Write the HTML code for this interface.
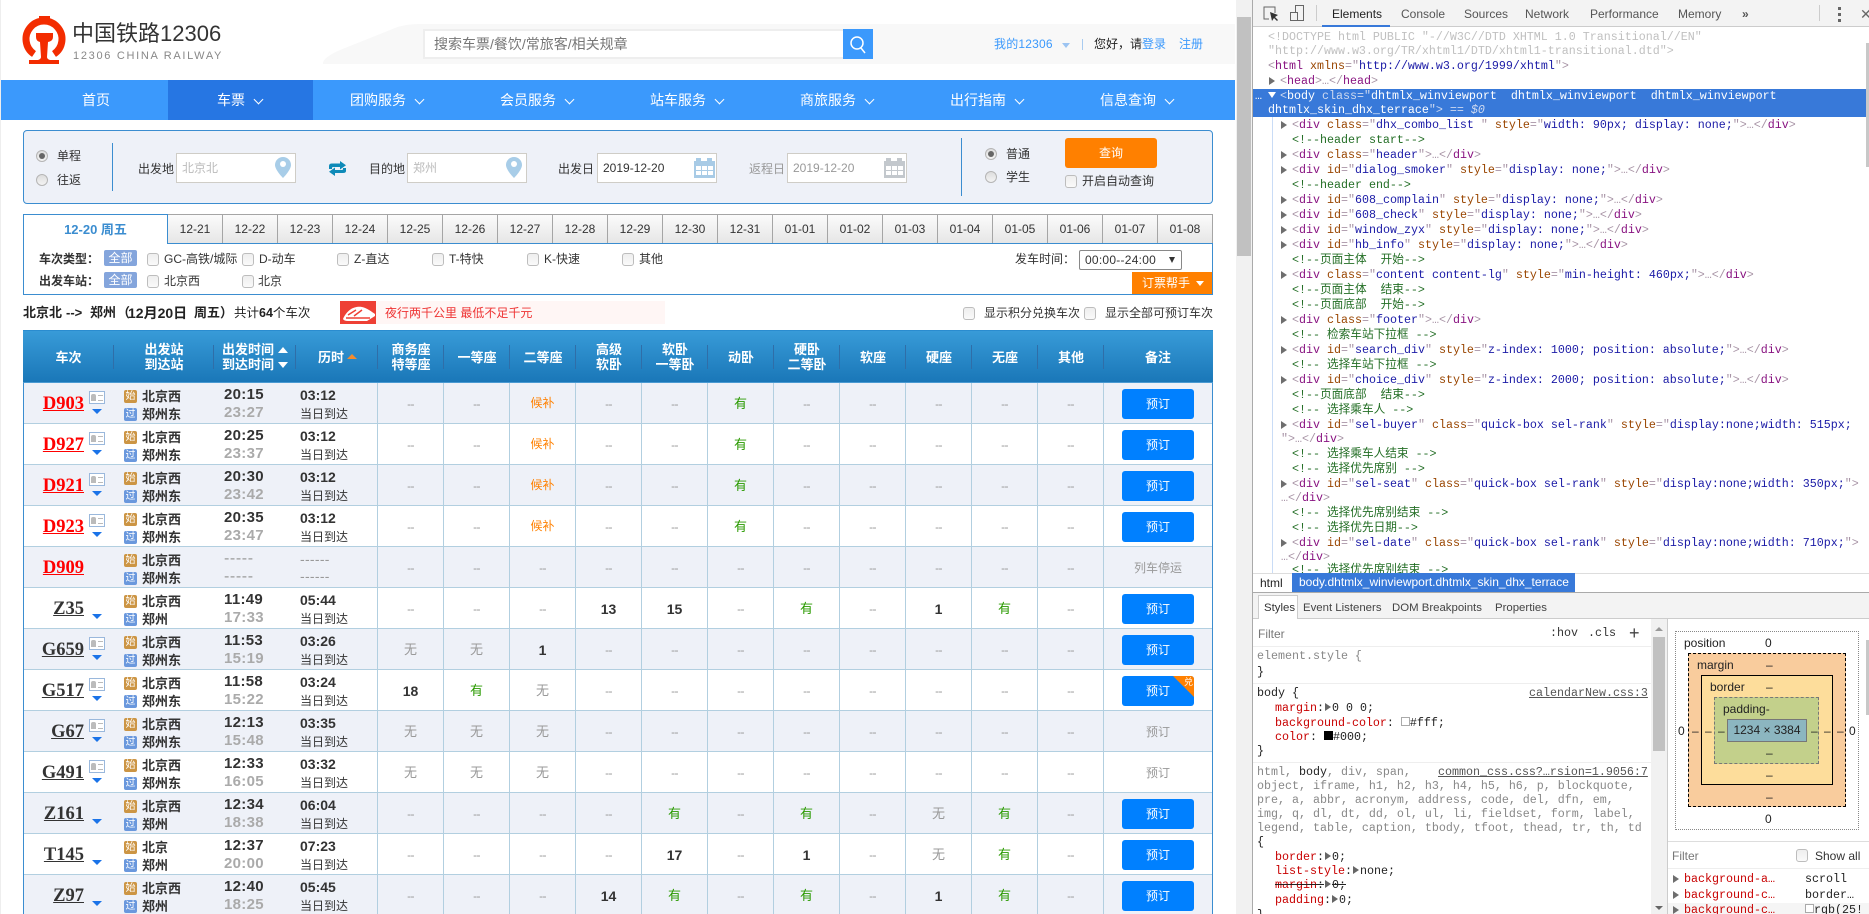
<!DOCTYPE html>
<html lang="zh"><head><meta charset="utf-8"><title>12306</title>
<style>
*{box-sizing:border-box;margin:0;padding:0}
html,body{width:1869px;height:914px;overflow:hidden;background:#fff}
body{position:relative;font:12px/1.2 "Liberation Sans","Noto Sans CJK SC",sans-serif;color:#333}
.x{position:absolute;white-space:nowrap}
.c{text-align:center}
.nav{left:1px;top:80px;width:1234px;height:40px;background:#3b99fc}
.nt{position:absolute;top:92px;color:#fff;font-size:14px;line-height:17px;white-space:nowrap}
.ar{position:absolute;top:96px;width:7px;height:7px;border:solid #fff;border-width:0 1.5px 1.5px 0;transform:rotate(45deg)}
.inp{position:absolute;top:153px;height:30px;width:120px;background:#fff;border:1px solid #cfcdc7;line-height:28px;padding-left:5px;color:#bbb}
.lb{position:absolute;line-height:16px;white-space:nowrap;color:#333}
.rd{position:absolute;width:12px;height:12px;border-radius:50%;background:linear-gradient(#ddd,#f4f4f4);border:1px solid #b5b5b5}
.rd.on:after{content:"";position:absolute;left:2px;top:2px;width:6px;height:6px;border-radius:50%;background:#666}
.cb{position:absolute;width:12px;height:13px;border:1px solid #bdbdbd;border-radius:3px;background:linear-gradient(#eee,#fafafa)}
.tab{position:absolute;top:214px;height:29px;width:55px;background:linear-gradient(#fbfbfb,#e6e6e6);border-top:1px solid #a5a5a5;border-right:1px solid #a5a5a5;text-align:center;line-height:28px;color:#333}
.tg{position:absolute;left:104px;width:33px;height:16px;background:#84a5dc;color:#fff;text-align:center;line-height:16px;border-radius:2px}
.r{position:absolute;left:24px;width:1188px;height:41px;border-bottom:1px solid #b2cfe0;background:#fff}
.r.a{background:#eef1f8}
.r>*{position:absolute;white-space:nowrap}
.n{left:0;width:60px;top:10px;text-align:right;font:bold 18.5px/22px "Liberation Serif",serif;color:#333;text-decoration:underline}
.n.red{color:#f00}
.cd{left:65px;top:8px;width:16px;height:13px;border:1px solid #9ab8dc;background:#fff}
.cd:before{content:"";position:absolute;left:1px;top:2px;width:5px;height:7px;background:#bbb;border-radius:2px 2px 0 0}
.cd:after{content:"";position:absolute;left:8px;top:3px;width:5px;height:4px;border:solid #bbb;border-width:1px 0}
.tr{left:68px;top:26px;border:solid transparent;border-width:5px 5px 0;border-top-color:#1a73e8;width:0;height:0}
.b1,.b2{left:100px;width:13px;height:13px;border-radius:2px;color:#fff;font:10px/13px "Liberation Sans","Noto Sans CJK SC",sans-serif;text-align:center}
.b1{top:7px;background:#cc9544}.b2{top:25px;background:#6a98dd}
.s1,.s2{left:118px;font-size:13px;font-weight:bold;line-height:17px;color:#333}
.s1{top:5px}.s2{top:23px}
.t1,.t2{left:200px;font:bold 15px/17px "Liberation Sans",sans-serif;letter-spacing:.3px}
.t1{top:3px;color:#333}.t2{top:21px;color:#aaa}
.d1{left:276px;top:4px;font:bold 14px/17px "Liberation Sans",sans-serif;color:#333}
.d2{left:276px;top:23px;line-height:16px;color:#333}
.dm{font:12px/17px "Liberation Sans",sans-serif;color:#999}
.t1.dm,.t2.dm{font-size:16px;letter-spacing:.6px;color:#999}
.d1.dm,.d2.dm{font-size:14px;letter-spacing:.3px}
.d2.dm{top:21px}
.s{left:353px;top:0;height:40px;display:flex}
.s i{display:block;width:66px;height:40px;border-left:1px solid #b2cfe0;text-align:center;line-height:42px;font-style:normal;color:#999;letter-spacing:-.6px}
.s i.g{color:#2a9a00;font-size:13px;letter-spacing:0}.s i.o{color:#ff8000;line-height:41px;font-size:12px;letter-spacing:0}.s i.w{line-height:41px;font-size:13px;color:#999;letter-spacing:0}.s i.b{color:#333;font-weight:bold;font-size:14px;letter-spacing:0}
.bt{left:1098px;top:6px;width:72px;height:30px;background:#0080ff;color:#fff;text-align:center;line-height:30px;border-radius:3px;overflow:hidden}
.bt.no{background:none;color:#999}
.st{left:1098px;top:6px;width:72px;text-align:center;line-height:30px;color:#999}
.hd{position:absolute;color:#fff;font-size:13px;font-weight:bold;line-height:15px;text-align:center;white-space:nowrap}
.sp{position:absolute;top:345px;width:1px;height:24px;background:#2f6ea8}
.rl{position:absolute;top:305px;line-height:16px;font-size:13px;font-weight:bold;color:#222;white-space:nowrap}
/* devtools */
.dv{position:absolute;left:1252px;top:0;width:617px;height:914px;background:#fff;border-left:1px solid #aaa;overflow:hidden}
.tb{position:absolute;top:7px;font:12px/14px "Liberation Sans",sans-serif;color:#555;white-space:nowrap}
.l{position:absolute;white-space:pre;font:11.67px/15px "Liberation Mono","Noto Sans CJK SC",monospace;color:#a894a6;height:15px}
.t{color:#881280}.a{color:#994500}.v{color:#1a1aa6}.cm{color:#236e25}
.tri{position:absolute;width:0;height:0;border:solid transparent;border-width:4px 0 4px 6px;border-left-color:#6e6e6e}
.p{position:absolute;white-space:pre;font:11.67px/15px "Liberation Mono","Noto Sans CJK SC",monospace;color:#888;height:15px}
.p em{font-style:normal;color:#c80000}.p b{font-weight:normal;color:#222}
.p s{color:#222}.p s em{color:#c80000}
.m{position:absolute;white-space:nowrap;font:12px/14px "Liberation Sans",sans-serif;color:#222}
.m.st2{font-size:11.4px}
.tm{display:inline-block;width:0;height:0;border:solid transparent;border-width:4px 0 4px 6px;border-left-color:#666;margin:0 1px}
</style></head><body>
<div class="x" style="left:0;top:0;width:1px;height:914px;background:#eee"></div>
<svg class="x" style="left:0;top:0" width="1235" height="80">
<path d="M323 64Q322 58 340 50L395 28Q405 24 420 24H1235V64Z" fill="#f8f8f8"/>
<path d="M34 54A18 18 0 1 1 54 54" stroke="#f32c00" stroke-width="7" fill="none"/>
<rect x="39" y="16" width="11" height="4" fill="#f32c00"/>
<path d="M36 33H53V37Q53 41 48 42L47 57Q47 59 50 60H59V64H29V60H38Q41 59 41 57L40 42Q36 41 36 37Z" fill="#f32c00"/>
</svg>
<div class="x" style="left:72px;top:21px;font-size:22px;line-height:26px;color:#333">中国铁路12306</div>
<div class="x" style="left:73px;top:49px;font-size:11px;line-height:14px;letter-spacing:1.7px;color:#888">12306 CHINA RAILWAY</div>
<div class="x" style="left:423px;top:29px;width:421px;height:30px;background:#fff;border:2px solid #eee;border-right:0;font-size:14px;line-height:26px;padding-left:9px;color:#777">搜索车票/餐饮/常旅客/相关规章</div>
<div class="x" style="left:843px;top:29px;width:30px;height:30px;background:#3b99fc"><svg width="30" height="30"><circle cx="14" cy="14" r="6" fill="none" stroke="#fff" stroke-width="1.5"/><path d="M18 19L22 24" stroke="#fff" stroke-width="1.5"/></svg></div>
<div class="x" style="left:994px;top:36px;line-height:16px;color:#3b99fc;letter-spacing:.2px">我的12306</div>
<div class="x" style="left:1062px;top:43px;border:solid transparent;border-width:5px 4.5px 0;border-top-color:#9cc4f2"></div>
<div class="x" style="left:1082px;top:39px;width:1px;height:11px;background:#a8cbf0"></div>
<div class="x" style="left:1094px;top:36px;line-height:16px;color:#222">您好，请<span style="color:#3b99fc">登录</span></div>
<div class="x" style="left:1179px;top:36px;line-height:16px;color:#3b99fc">注册</div>

<div class="x nav"></div>
<div class="x" style="left:168px;top:80px;width:145px;height:40px;background:#2676e3"></div>
<span class="nt" style="left:82px">首页</span>
<span class="nt" style="left:217px">车票</span><i class="ar" style="left:255px"></i>
<span class="nt" style="left:350px">团购服务</span><i class="ar" style="left:416px"></i>
<span class="nt" style="left:500px">会员服务</span><i class="ar" style="left:566px"></i>
<span class="nt" style="left:650px">站车服务</span><i class="ar" style="left:716px"></i>
<span class="nt" style="left:800px">商旅服务</span><i class="ar" style="left:866px"></i>
<span class="nt" style="left:950px">出行指南</span><i class="ar" style="left:1016px"></i>
<span class="nt" style="left:1100px">信息查询</span><i class="ar" style="left:1166px"></i>

<div class="x" style="left:1236px;top:0;width:16px;height:914px;background:#f1f1f1"></div>
<div class="x" style="left:1237px;top:17px;width:14px;height:239px;background:#c1c1c1"></div>

<!-- search panel -->
<div class="x" style="left:23px;top:130px;width:1190px;height:74px;background:#eef1f8;border:1px solid #3b8dd0;border-radius:4px"></div>
<i class="rd on" style="left:36px;top:150px"></i><span class="lb" style="left:57px;top:148px">单程</span>
<i class="rd" style="left:36px;top:174px"></i><span class="lb" style="left:57px;top:172px">往返</span>
<div class="x" style="left:112px;top:143px;width:1px;height:48px;background:#3b8dd0"></div>
<span class="lb" style="left:138px;top:161px">出发地</span>
<div class="inp" style="left:176px">北京北</div>
<svg class="x" style="left:275px;top:157px" width="16" height="21"><path d="M8 0C3.500 0 0 3.500 0 8C0 13 8 21 8 21C8 21 16 13 16 8C16 3.500 12.500 0 8 0Z" fill="#a8cde8"/><circle cx="8" cy="7" r="3" fill="#fff"/></svg>
<svg class="x" style="left:329px;top:161px" width="17" height="15" fill="#0e8ab8"><path d="M0 8V5Q0 2.500 3 2.500H11V0L17 4.200 11 8.500V6H4Q3 6 3 7V8Z"/><path d="M17 7V10Q17 12 14 12H6V15L0 10.800 6 6.500V9H13Q14 9 14 8V7Z"/></svg>
<span class="lb" style="left:369px;top:161px">目的地</span>
<div class="inp" style="left:407px">郑州</div>
<svg class="x" style="left:506px;top:157px" width="16" height="21"><path d="M8 0C3.500 0 0 3.500 0 8C0 13 8 21 8 21C8 21 16 13 16 8C16 3.500 12.500 0 8 0Z" fill="#a8cde8"/><circle cx="8" cy="7" r="3" fill="#fff"/></svg>
<span class="lb" style="left:558px;top:161px">出发日</span>
<div class="inp" style="left:597px;color:#333">2019-12-20</div>
<svg class="x" style="left:694px;top:158px" width="21" height="20" fill="#a8cbe6"><rect x="2" width="5" height="5"/><rect x="13" width="5" height="5"/><rect y="3" width="21" height="17"/><g fill="#fff"><rect x="2" y="8" width="5" height="4"/><rect x="8" y="8" width="5" height="4"/><rect x="14" y="8" width="5" height="4"/><rect x="2" y="13" width="5" height="4"/><rect x="8" y="13" width="5" height="4"/><rect x="14" y="13" width="5" height="4"/></g></svg>
<span class="lb" style="left:749px;top:161px;color:#999">返程日</span>
<div class="inp" style="left:787px;color:#999">2019-12-20</div>
<svg class="x" style="left:884px;top:158px" width="21" height="20" fill="#c3c8cd"><rect x="2" width="5" height="5"/><rect x="13" width="5" height="5"/><rect y="3" width="21" height="17"/><g fill="#fff"><rect x="2" y="8" width="5" height="4"/><rect x="8" y="8" width="5" height="4"/><rect x="14" y="8" width="5" height="4"/><rect x="2" y="13" width="5" height="4"/><rect x="8" y="13" width="5" height="4"/><rect x="14" y="13" width="5" height="4"/></g></svg>
<div class="x" style="left:961px;top:138px;width:1px;height:58px;background:#3b8dd0"></div>
<i class="rd on" style="left:985px;top:148px"></i><span class="lb" style="left:1006px;top:146px">普通</span>
<i class="rd" style="left:985px;top:171px"></i><span class="lb" style="left:1006px;top:169px">学生</span>
<div class="x c" style="left:1065px;top:138px;width:92px;height:30px;background:#ff8000;border-radius:3px;color:#fff;font-size:12px;line-height:30px">查询</div>
<i class="cb" style="left:1065px;top:175px"></i><span class="lb" style="left:1082px;top:173px">开启自动查询</span>

<!-- date tabs -->
<div class="x c" style="left:23px;top:214px;width:145px;height:30px;background:#fff;border:1px solid #3b8dd0;border-bottom:0;border-right:1px solid #3b8dd0;color:#3b8dd0;font-weight:bold;font-size:13px;line-height:30px;z-index:2">12-20 周五</div>
<div class="tab" style="left:168px">12-21</div><div class="tab" style="left:223px">12-22</div><div class="tab" style="left:278px">12-23</div><div class="tab" style="left:333px">12-24</div><div class="tab" style="left:388px">12-25</div><div class="tab" style="left:443px">12-26</div><div class="tab" style="left:498px">12-27</div><div class="tab" style="left:553px">12-28</div><div class="tab" style="left:608px">12-29</div><div class="tab" style="left:663px">12-30</div><div class="tab" style="left:718px">12-31</div><div class="tab" style="left:773px">01-01</div><div class="tab" style="left:828px">01-02</div><div class="tab" style="left:883px">01-03</div><div class="tab" style="left:938px">01-04</div><div class="tab" style="left:993px">01-05</div><div class="tab" style="left:1048px">01-06</div><div class="tab" style="left:1103px">01-07</div><div class="tab" style="left:1158px">01-08</div>

<!-- filter -->
<div class="x" style="left:23px;top:243px;width:1190px;height:52px;border:1px solid #3b8dd0;background:#fff"></div>
<div class="x" style="left:168px;top:243px;width:1045px;height:1px;background:#3b8dd0"></div>
<span class="lb" style="left:39px;top:251px;font-weight:bold">车次类型：</span><span class="tg" style="top:250px">全部</span>
<i class="cb" style="left:147px;top:253px"></i><span class="lb" style="left:164px;top:251px">GC-高铁/城际</span>
<i class="cb" style="left:242px;top:253px"></i><span class="lb" style="left:259px;top:251px">D-动车</span>
<i class="cb" style="left:337px;top:253px"></i><span class="lb" style="left:354px;top:251px">Z-直达</span>
<i class="cb" style="left:432px;top:253px"></i><span class="lb" style="left:449px;top:251px">T-特快</span>
<i class="cb" style="left:527px;top:253px"></i><span class="lb" style="left:544px;top:251px">K-快速</span>
<i class="cb" style="left:622px;top:253px"></i><span class="lb" style="left:639px;top:251px">其他</span>
<span class="lb" style="left:39px;top:273px;font-weight:bold">出发车站：</span><span class="tg" style="top:272px">全部</span>
<i class="cb" style="left:147px;top:275px"></i><span class="lb" style="left:164px;top:273px">北京西</span>
<i class="cb" style="left:242px;top:275px"></i><span class="lb" style="left:258px;top:273px">北京</span>
<span class="lb" style="left:1015px;top:251px">发车时间：</span>
<div class="x" style="left:1079px;top:250px;width:103px;height:20px;border:1px solid #888;border-radius:2px;background:#fff;line-height:19px;padding-left:5px;color:#333;letter-spacing:.25px">00:00--24:00</div>
<div class="x" style="left:1169px;top:257px;border:solid transparent;border-width:6px 3.500px 0;border-top-color:#333"></div>
<div class="x" style="left:1132px;top:272px;width:80px;height:22px;background:#ff8000;color:#fff;line-height:22px;padding-left:10px">订票帮手</div>
<div class="x" style="left:1196px;top:281px;border:solid transparent;border-width:5px 4.500px 0;border-top-color:#fff"></div>

<!-- result line -->
<span class="rl" style="left:23px">北京北</span><span class="rl" style="left:66px">--&gt;</span><span class="rl" style="left:90px">郑州</span><span class="rl" style="left:117px">（</span><span class="rl" style="left:128px;font-size:14px">12月20日</span><span class="rl" style="left:194px">周五</span><span class="rl" style="left:220px">）</span>
<div class="x" style="left:234px;top:305px;line-height:16px;color:#222;font-size:12.5px">共计<b>64</b>个车次</div>
<div class="x" style="left:340px;top:301px;width:325px;height:23px;background:#fff6f5"></div>
<div class="x" style="left:340px;top:301px;width:36px;height:23px;background:#ee4035"><svg width="36" height="23"><path d="M3 18C8 7 16 5 22 6C27 7 32 11 35 13V15L27 20H8Q4 20 3 18Z" fill="#fff"/><path d="M8 14L16 9M14 15L22 9M6 17H30" stroke="#ee4035" stroke-width="1.500" fill="none"/></svg></div>
<div class="x" style="left:385px;top:305px;line-height:16px;color:#ee3333">夜行两千公里 最低不足千元</div>
<i class="cb" style="left:963px;top:307px"></i><span class="lb" style="left:984px;top:305px">显示积分兑换车次</span>
<i class="cb" style="left:1084px;top:307px"></i><span class="lb" style="left:1105px;top:305px">显示全部可预订车次</span>

<!-- table head -->
<div class="x" style="left:23px;top:330px;width:1190px;height:53px;background:linear-gradient(#389bd8,#1a77b8);border-top:1px solid #2a8ccf;border-bottom:1px solid #4a9ad2"></div>
<div class="x" style="left:23px;top:383px;width:1px;height:531px;background:#3b8dd0"></div>
<div class="x" style="left:1212px;top:383px;width:1px;height:531px;background:#3b8dd0"></div>
<i class="sp" style="left:113px"></i><i class="sp" style="left:213px"></i><i class="sp" style="left:295px"></i><i class="sp" style="left:377px"></i><i class="sp" style="left:443px"></i><i class="sp" style="left:509px"></i><i class="sp" style="left:575px"></i><i class="sp" style="left:641px"></i><i class="sp" style="left:707px"></i><i class="sp" style="left:773px"></i><i class="sp" style="left:839px"></i><i class="sp" style="left:905px"></i><i class="sp" style="left:971px"></i><i class="sp" style="left:1037px"></i><i class="sp" style="left:1103px"></i>
<div class="hd" style="left:24px;width:89px;top:350px">车次</div>
<div class="hd" style="left:114px;width:100px;top:342px">出发站<br>到达站</div>
<div class="hd" style="left:222px;top:342px">出发时间<br>到达时间</div>
<div class="x" style="left:278px;top:347px;border:solid transparent;border-width:0 5px 6px;border-bottom-color:#fff"></div>
<div class="x" style="left:278px;top:362px;border:solid transparent;border-width:6px 5px 0;border-top-color:#fff"></div>
<div class="hd" style="left:318px;top:350px">历时</div>
<div class="x" style="left:347px;top:354px;border:solid transparent;border-width:0 5px 5px;border-bottom-color:#f38c2f"></div>
<div class="hd" style="left:378px;width:66px;top:342px">商务座<br>特等座</div>
<div class="hd" style="left:444px;width:66px;top:350px">一等座</div>
<div class="hd" style="left:510px;width:66px;top:350px">二等座</div>
<div class="hd" style="left:576px;width:66px;top:342px">高级<br>软卧</div>
<div class="hd" style="left:642px;width:66px;top:342px">软卧<br>一等卧</div>
<div class="hd" style="left:708px;width:66px;top:350px">动卧</div>
<div class="hd" style="left:774px;width:66px;top:342px">硬卧<br>二等卧</div>
<div class="hd" style="left:840px;width:66px;top:350px">软座</div>
<div class="hd" style="left:906px;width:66px;top:350px">硬座</div>
<div class="hd" style="left:972px;width:66px;top:350px">无座</div>
<div class="hd" style="left:1038px;width:66px;top:350px">其他</div>
<div class="hd" style="left:1104px;width:108px;top:350px">备注</div>

<!-- rows -->
<div class="r a" style="top:383px"><a class="n red">D903</a><b class="cd"></b><u class="tr"></u><em class="b1">始</em><em class="b2">过</em><span class="s1">北京西</span><span class="s2">郑州东</span><span class="t1">20:15</span><span class="t2">23:27</span><span class="d1">03:12</span><span class="d2">当日到达</span><div class="s"><i>--</i><i>--</i><i class="o">候补</i><i>--</i><i>--</i><i class="g">有</i><i>--</i><i>--</i><i>--</i><i>--</i><i>--</i><i></i></div><span class="bt">预订</span></div>
<div class="r" style="top:424px"><a class="n red">D927</a><b class="cd"></b><u class="tr"></u><em class="b1">始</em><em class="b2">过</em><span class="s1">北京西</span><span class="s2">郑州东</span><span class="t1">20:25</span><span class="t2">23:37</span><span class="d1">03:12</span><span class="d2">当日到达</span><div class="s"><i>--</i><i>--</i><i class="o">候补</i><i>--</i><i>--</i><i class="g">有</i><i>--</i><i>--</i><i>--</i><i>--</i><i>--</i><i></i></div><span class="bt">预订</span></div>
<div class="r a" style="top:465px"><a class="n red">D921</a><b class="cd"></b><u class="tr"></u><em class="b1">始</em><em class="b2">过</em><span class="s1">北京西</span><span class="s2">郑州东</span><span class="t1">20:30</span><span class="t2">23:42</span><span class="d1">03:12</span><span class="d2">当日到达</span><div class="s"><i>--</i><i>--</i><i class="o">候补</i><i>--</i><i>--</i><i class="g">有</i><i>--</i><i>--</i><i>--</i><i>--</i><i>--</i><i></i></div><span class="bt">预订</span></div>
<div class="r" style="top:506px"><a class="n red">D923</a><b class="cd"></b><u class="tr"></u><em class="b1">始</em><em class="b2">过</em><span class="s1">北京西</span><span class="s2">郑州东</span><span class="t1">20:35</span><span class="t2">23:47</span><span class="d1">03:12</span><span class="d2">当日到达</span><div class="s"><i>--</i><i>--</i><i class="o">候补</i><i>--</i><i>--</i><i class="g">有</i><i>--</i><i>--</i><i>--</i><i>--</i><i>--</i><i></i></div><span class="bt">预订</span></div>
<div class="r a" style="top:547px"><a class="n red">D909</a><em class="b1">始</em><em class="b2">过</em><span class="s1">北京西</span><span class="s2">郑州东</span><span class="t1 dm">-----</span><span class="t2 dm">-----</span><span class="d1 dm">------</span><span class="d2 dm">------</span><div class="s"><i>--</i><i>--</i><i>--</i><i>--</i><i>--</i><i>--</i><i>--</i><i>--</i><i>--</i><i>--</i><i>--</i><i></i></div><span class="st">列车停运</span></div>
<div class="r" style="top:588px"><a class="n">Z35</a><u class="tr"></u><em class="b1">始</em><em class="b2">过</em><span class="s1">北京西</span><span class="s2">郑州</span><span class="t1">11:49</span><span class="t2">17:33</span><span class="d1">05:44</span><span class="d2">当日到达</span><div class="s"><i>--</i><i>--</i><i>--</i><i class="b">13</i><i class="b">15</i><i>--</i><i class="g">有</i><i>--</i><i class="b">1</i><i class="g">有</i><i>--</i><i></i></div><span class="bt">预订</span></div>
<div class="r a" style="top:629px"><a class="n">G659</a><b class="cd"></b><u class="tr"></u><em class="b1">始</em><em class="b2">过</em><span class="s1">北京西</span><span class="s2">郑州东</span><span class="t1">11:53</span><span class="t2">15:19</span><span class="d1">03:26</span><span class="d2">当日到达</span><div class="s"><i class="w">无</i><i class="w">无</i><i class="b">1</i><i>--</i><i>--</i><i>--</i><i>--</i><i>--</i><i>--</i><i>--</i><i>--</i><i></i></div><span class="bt">预订</span></div>
<div class="r" style="top:670px"><a class="n">G517</a><b class="cd"></b><u class="tr"></u><em class="b1">始</em><em class="b2">过</em><span class="s1">北京西</span><span class="s2">郑州东</span><span class="t1">11:58</span><span class="t2">15:22</span><span class="d1">03:24</span><span class="d2">当日到达</span><div class="s"><i class="b">18</i><i class="g">有</i><i class="w">无</i><i>--</i><i>--</i><i>--</i><i>--</i><i>--</i><i>--</i><i>--</i><i>--</i><i></i></div><span class="bt">预订<svg style="position:absolute;right:0;top:0" width="21" height="21"><path d="M0 0H21V21Z" fill="#ff8000"/></svg><span style="position:absolute;right:1px;top:0;color:#fff;font-size:9px;line-height:12px">兑</span></span></div>
<div class="r a" style="top:711px"><a class="n">G67</a><b class="cd"></b><u class="tr"></u><em class="b1">始</em><em class="b2">过</em><span class="s1">北京西</span><span class="s2">郑州东</span><span class="t1">12:13</span><span class="t2">15:48</span><span class="d1">03:35</span><span class="d2">当日到达</span><div class="s"><i class="w">无</i><i class="w">无</i><i class="w">无</i><i>--</i><i>--</i><i>--</i><i>--</i><i>--</i><i>--</i><i>--</i><i>--</i><i></i></div><span class="bt no">预订</span></div>
<div class="r" style="top:752px"><a class="n">G491</a><b class="cd"></b><u class="tr"></u><em class="b1">始</em><em class="b2">过</em><span class="s1">北京西</span><span class="s2">郑州东</span><span class="t1">12:33</span><span class="t2">16:05</span><span class="d1">03:32</span><span class="d2">当日到达</span><div class="s"><i class="w">无</i><i class="w">无</i><i class="w">无</i><i>--</i><i>--</i><i>--</i><i>--</i><i>--</i><i>--</i><i>--</i><i>--</i><i></i></div><span class="bt no">预订</span></div>
<div class="r a" style="top:793px"><a class="n">Z161</a><u class="tr"></u><em class="b1">始</em><em class="b2">过</em><span class="s1">北京西</span><span class="s2">郑州</span><span class="t1">12:34</span><span class="t2">18:38</span><span class="d1">06:04</span><span class="d2">当日到达</span><div class="s"><i>--</i><i>--</i><i>--</i><i>--</i><i class="g">有</i><i>--</i><i class="g">有</i><i>--</i><i class="w">无</i><i class="g">有</i><i>--</i><i></i></div><span class="bt">预订</span></div>
<div class="r" style="top:834px"><a class="n">T145</a><u class="tr"></u><em class="b1">始</em><em class="b2">过</em><span class="s1">北京</span><span class="s2">郑州</span><span class="t1">12:37</span><span class="t2">20:00</span><span class="d1">07:23</span><span class="d2">当日到达</span><div class="s"><i>--</i><i>--</i><i>--</i><i>--</i><i class="b">17</i><i>--</i><i class="b">1</i><i>--</i><i class="w">无</i><i class="g">有</i><i>--</i><i></i></div><span class="bt">预订</span></div>
<div class="r a" style="top:875px"><a class="n">Z97</a><u class="tr"></u><em class="b1">始</em><em class="b2">过</em><span class="s1">北京西</span><span class="s2">郑州</span><span class="t1">12:40</span><span class="t2">18:25</span><span class="d1">05:45</span><span class="d2">当日到达</span><div class="s"><i>--</i><i>--</i><i>--</i><i class="b">14</i><i class="g">有</i><i>--</i><i class="g">有</i><i>--</i><i class="b">1</i><i class="g">有</i><i>--</i><i></i></div><span class="bt">预订</span></div>

<!-- devtools: coordinates inside relative to x=1253 -->
<div class="dv">
<div class="x" style="left:0;top:0;width:616px;height:27px;background:#f3f3f3;border-bottom:1px solid #ccc"></div>
<svg class="x" style="left:9px;top:5px" width="45" height="18" fill="none" stroke="#666"><path d="M13 8V2H2V14H7"/><path d="M8 7L10 16 12 13 15 16 16 15 13 12 16 10Z" fill="#333" stroke="none"/><rect x="33.500" y=".5" width="8" height="15"/><rect x="28.500" y="7.500" width="7" height="8" fill="#f3f3f3"/></svg>
<div class="x" style="left:63px;top:5px;width:1px;height:16px;background:#ccc"></div>
<span class="tb" style="left:79px;color:#222">Elements</span><span class="tb" style="left:148px">Console</span><span class="tb" style="left:211px">Sources</span><span class="tb" style="left:272px">Network</span><span class="tb" style="left:337px">Performance</span><span class="tb" style="left:425px">Memory</span><span class="tb" style="left:489px;font-weight:bold">»</span>
<div class="x" style="left:69px;top:25px;width:68px;height:2px;background:#3879d9"></div>
<div class="x" style="left:566px;top:5px;width:1px;height:16px;background:#ccc"></div>
<span class="x" style="left:585px;top:7px;width:3px;height:3px;background:#666;box-shadow:0 6px #666,0 12px #666"></span>
<span class="tb" style="left:607px;font-size:14px;color:#666">✕</span>
<div class="x" style="left:613px;top:43px;width:3px;height:124px;background:#c8c8c8"></div>
<div class="x" style="left:19px;top:117px;width:1px;height:456px;background:#c9dcf6"></div>

<div class="l" style="left:15px;top:30px;color:#c0c0c0">&lt;!DOCTYPE html PUBLIC "-//W3C//DTD XHTML 1.0 Transitional//EN"</div>
<div class="l" style="left:15px;top:44px;color:#c0c0c0">"http://www.w3.org/TR/xhtml1/DTD/xhtml1-transitional.dtd"&gt;</div>
<div class="l" style="left:15px;top:59px">&lt;<span class="t">html</span> <span class="a">xmlns</span>="<span class="v">http://www.w3.org/1999/xhtml</span>"&gt;</div>
<i class="tri" style="left:16px;top:77px"></i><div class="l" style="left:27px;top:74px">&lt;<span class="t">head</span>&gt;…&lt;/<span class="t">head</span>&gt;</div>

<div class="x" style="left:0;top:89px;width:613px;height:28px;background:#3879d9"></div>
<div class="l" style="left:2px;top:89px;color:#fff">…</div>
<i class="tri" style="left:15px;top:92px;border-width:6px 4px 0;border-color:#fff transparent transparent"></i>
<div class="l" style="left:27px;top:89px;color:#cdd9f0">&lt;<span style="color:#fff">body</span> class="<span style="color:#fff">dhtmlx_winviewport  dhtmlx_winviewport  dhtmlx_winviewport</span></div>
<div class="l" style="left:15px;top:103px;color:#cdd9f0"><span style="color:#fff">dhtmlx_skin_dhx_terrace</span>"&gt; == <i>$0</i></div>

<i class="tri" style="left:28px;top:121px"></i><div class="l" style="left:39px;top:118px">&lt;<span class="t">div</span> <span class="a">class</span>="<span class="v">dhx_combo_list </span>" <span class="a">style</span>="<span class="v">width: 90px; display: none;</span>"&gt;…&lt;/<span class="t">div</span>&gt;</div>
<div class="l cm" style="left:39px;top:133px">&lt;!--header start--&gt;</div>
<i class="tri" style="left:28px;top:151px"></i><div class="l" style="left:39px;top:148px">&lt;<span class="t">div</span> <span class="a">class</span>="<span class="v">header</span>"&gt;…&lt;/<span class="t">div</span>&gt;</div>
<i class="tri" style="left:28px;top:166px"></i><div class="l" style="left:39px;top:163px">&lt;<span class="t">div</span> <span class="a">id</span>="<span class="v">dialog_smoker</span>" <span class="a">style</span>="<span class="v">display: none;</span>"&gt;…&lt;/<span class="t">div</span>&gt;</div>
<div class="l cm" style="left:39px;top:178px">&lt;!--header end--&gt;</div>
<i class="tri" style="left:28px;top:196px"></i><div class="l" style="left:39px;top:193px">&lt;<span class="t">div</span> <span class="a">id</span>="<span class="v">608_complain</span>" <span class="a">style</span>="<span class="v">display: none;</span>"&gt;…&lt;/<span class="t">div</span>&gt;</div>
<i class="tri" style="left:28px;top:211px"></i><div class="l" style="left:39px;top:208px">&lt;<span class="t">div</span> <span class="a">id</span>="<span class="v">608_check</span>" <span class="a">style</span>="<span class="v">display: none;</span>"&gt;…&lt;/<span class="t">div</span>&gt;</div>
<i class="tri" style="left:28px;top:226px"></i><div class="l" style="left:39px;top:223px">&lt;<span class="t">div</span> <span class="a">id</span>="<span class="v">window_zyx</span>" <span class="a">style</span>="<span class="v">display: none;</span>"&gt;…&lt;/<span class="t">div</span>&gt;</div>
<i class="tri" style="left:28px;top:241px"></i><div class="l" style="left:39px;top:238px">&lt;<span class="t">div</span> <span class="a">id</span>="<span class="v">hb_info</span>" <span class="a">style</span>="<span class="v">display: none;</span>"&gt;…&lt;/<span class="t">div</span>&gt;</div>
<div class="l cm" style="left:39px;top:253px">&lt;!--页面主体  开始--&gt;</div>
<i class="tri" style="left:28px;top:271px"></i><div class="l" style="left:39px;top:268px">&lt;<span class="t">div</span> <span class="a">class</span>="<span class="v">content content-lg</span>" <span class="a">style</span>="<span class="v">min-height: 460px;</span>"&gt;…&lt;/<span class="t">div</span>&gt;</div>
<div class="l cm" style="left:39px;top:283px">&lt;!--页面主体  结束--&gt;</div>
<div class="l cm" style="left:39px;top:298px">&lt;!--页面底部  开始--&gt;</div>
<i class="tri" style="left:28px;top:316px"></i><div class="l" style="left:39px;top:313px">&lt;<span class="t">div</span> <span class="a">class</span>="<span class="v">footer</span>"&gt;…&lt;/<span class="t">div</span>&gt;</div>
<div class="l cm" style="left:39px;top:328px">&lt;!-- 检索车站下拉框 --&gt;</div>
<i class="tri" style="left:28px;top:346px"></i><div class="l" style="left:39px;top:343px">&lt;<span class="t">div</span> <span class="a">id</span>="<span class="v">search_div</span>" <span class="a">style</span>="<span class="v">z-index: 1000; position: absolute;</span>"&gt;…&lt;/<span class="t">div</span>&gt;</div>
<div class="l cm" style="left:39px;top:358px">&lt;!-- 选择车站下拉框 --&gt;</div>
<i class="tri" style="left:28px;top:376px"></i><div class="l" style="left:39px;top:373px">&lt;<span class="t">div</span> <span class="a">id</span>="<span class="v">choice_div</span>" <span class="a">style</span>="<span class="v">z-index: 2000; position: absolute;</span>"&gt;…&lt;/<span class="t">div</span>&gt;</div>
<div class="l cm" style="left:39px;top:388px">&lt;!--页面底部  结束--&gt;</div>
<div class="l cm" style="left:39px;top:403px">&lt;!-- 选择乘车人 --&gt;</div>
<i class="tri" style="left:28px;top:421px"></i><div class="l" style="left:39px;top:418px">&lt;<span class="t">div</span> <span class="a">id</span>="<span class="v">sel-buyer</span>" <span class="a">class</span>="<span class="v">quick-box sel-rank</span>" <span class="a">style</span>="<span class="v">display:none;width: 515px;</span></div>
<div class="l" style="left:28px;top:432px">"&gt;…&lt;/<span class="t">div</span>&gt;</div>
<div class="l cm" style="left:39px;top:447px">&lt;!-- 选择乘车人结束 --&gt;</div>
<div class="l cm" style="left:39px;top:462px">&lt;!-- 选择优先席别 --&gt;</div>
<i class="tri" style="left:28px;top:480px"></i><div class="l" style="left:39px;top:477px">&lt;<span class="t">div</span> <span class="a">id</span>="<span class="v">sel-seat</span>" <span class="a">class</span>="<span class="v">quick-box sel-rank</span>" <span class="a">style</span>="<span class="v">display:none;width: 350px;</span>"&gt;</div>
<div class="l" style="left:28px;top:491px">…&lt;/<span class="t">div</span>&gt;</div>
<div class="l cm" style="left:39px;top:506px">&lt;!-- 选择优先席别结束 --&gt;</div>
<div class="l cm" style="left:39px;top:521px">&lt;!-- 选择优先日期--&gt;</div>
<i class="tri" style="left:28px;top:539px"></i><div class="l" style="left:39px;top:536px">&lt;<span class="t">div</span> <span class="a">id</span>="<span class="v">sel-date</span>" <span class="a">class</span>="<span class="v">quick-box sel-rank</span>" <span class="a">style</span>="<span class="v">display:none;width: 710px;</span>"&gt;</div>
<div class="l" style="left:28px;top:550px">…&lt;/<span class="t">div</span>&gt;</div>
<div class="l cm" style="left:39px;top:563px">&lt;!-- 选择优先席别结束 --&gt;</div>

<!-- breadcrumb -->
<div class="x" style="left:0;top:573px;width:616px;height:20px;background:#fff;border-top:1px solid #ddd;border-bottom:1px solid #aaa"></div>
<span class="m" style="left:7px;top:576px">html</span>
<div class="x" style="left:39px;top:573px;width:283px;height:19px;background:#3879d9;color:#fff;line-height:19px;padding-left:7px;font-size:12px">body.dhtmlx_winviewport.dhtmlx_skin_dhx_terrace</div>

<!-- sub tabs -->
<div class="x" style="left:0;top:593px;width:616px;height:26px;background:#f3f3f3;border-bottom:1px solid #ccc"></div>
<div class="x" style="left:5px;top:595px;width:40px;height:24px;background:#fff;border:1px solid #ccc;border-bottom:0"></div>
<span class="m st2" style="left:11px;top:601px;color:#333">Styles</span><span class="m st2" style="left:50px;top:601px;color:#444">Event Listeners</span><span class="m st2" style="left:139px;top:601px;color:#444">DOM Breakpoints</span><span class="m st2" style="left:242px;top:601px;color:#444">Properties</span>

<!-- styles -->
<span class="m" style="left:5px;top:627px;color:#777">Filter</span>
<div class="p" style="left:297px;top:626px;color:#333">:hov</div><div class="p" style="left:335px;top:626px;color:#333">.cls</div>
<div class="m" style="left:376px;top:624px;font-size:18px;line-height:18px;color:#444">+</div>
<div class="x" style="left:0;top:646px;width:398px;height:1px;background:#eee"></div>
<div class="p" style="left:4px;top:649px">element.style {</div>
<div class="p" style="left:4px;top:665px;color:#222">}</div>
<div class="x" style="left:0;top:683px;width:398px;height:1px;background:#eee"></div>
<div class="p" style="left:4px;top:686px;color:#222">body {</div>
<div class="p" style="left:276px;top:686px;color:#555;text-decoration:underline">calendarNew.css:3</div>
<div class="p" style="left:22px;top:701px;color:#222"><em>margin</em>:<span class="tm"></span><b>0 0 0</b>;</div>
<div class="p" style="left:22px;top:716px;color:#222"><em>background-color</em>: <span style="display:inline-block;width:9px;height:9px;border:1px solid #aaa;background:#fff"></span>#fff;</div>
<div class="p" style="left:22px;top:730px;color:#222"><em>color</em>: <span style="display:inline-block;width:9px;height:9px;background:#000"></span>#000;</div>
<div class="p" style="left:4px;top:744px;color:#222">}</div>
<div class="x" style="left:0;top:762px;width:398px;height:1px;background:#eee"></div>
<div class="p" style="left:4px;top:765px">html, <b>body</b>, div, span,</div>
<div class="p" style="left:185px;top:765px;color:#555;text-decoration:underline">common_css.css?…rsion=1.9056:7</div>
<div class="p" style="left:4px;top:779px">object, iframe, h1, h2, h3, h4, h5, h6, p, blockquote,</div>
<div class="p" style="left:4px;top:793px">pre, a, abbr, acronym, address, code, del, dfn, em,</div>
<div class="p" style="left:4px;top:807px">img, q, dl, dt, dd, ol, ul, li, fieldset, form, label,</div>
<div class="p" style="left:4px;top:821px">legend, table, caption, tbody, tfoot, thead, tr, th, td</div>
<div class="p" style="left:4px;top:835px;color:#222">{</div>
<div class="p" style="left:22px;top:850px;color:#222"><em>border</em>:<span class="tm"></span><b>0</b>;</div>
<div class="p" style="left:22px;top:864px;color:#222"><em>list-style</em>:<span class="tm"></span><b>none</b>;</div>
<div class="p" style="left:22px;top:878px;color:#222;text-decoration:line-through"><em>margin</em>:<span class="tm"></span><b>0</b>;</div>
<div class="p" style="left:22px;top:893px;color:#222"><em>padding</em>:<span class="tm"></span><b>0</b>;</div>
<div class="p" style="left:4px;top:908px;color:#222">}</div>

<!-- styles scrollbar -->
<div class="x" style="left:398px;top:619px;width:16px;height:295px;background:#f1f1f1"></div>
<div class="x" style="left:400px;top:637px;width:12px;height:114px;background:#c1c1c1"></div>
<div class="x" style="left:402px;top:627px;border:solid transparent;border-width:0 4px 4px;border-bottom-color:#999"></div>
<div class="x" style="left:402px;top:906px;border:solid transparent;border-width:4px 4px 0;border-top-color:#666"></div>
<div class="x" style="left:414px;top:619px;width:1px;height:295px;background:#ccc"></div>

<!-- box model -->
<div class="x" style="left:422px;top:631px;width:184px;height:199px;border:1px dotted #888"></div>
<div class="x" style="left:435px;top:653px;width:158px;height:154px;background:#f9cc9d;border:1px dashed #000"></div>
<div class="x" style="left:448px;top:675px;width:132px;height:110px;background:#fddd9b;border:1px solid #000"></div>
<div class="x" style="left:461px;top:697px;width:105px;height:67px;background:#c3d08b;border:1px dashed #777"></div>
<div class="x c" style="left:474px;top:719px;width:80px;height:23px;background:#8cb6c0;border:1px solid #777;line-height:21px;font-size:12px;color:#222">1234 × 3384</div>
<span class="m" style="left:431px;top:636px">position</span><span class="m" style="left:512px;top:636px">0</span>
<span class="m" style="left:444px;top:658px">margin</span><span class="m" style="left:513px;top:658px">‒</span>
<span class="m" style="left:457px;top:680px">border</span><span class="m" style="left:513px;top:680px">‒</span>
<span class="m" style="left:470px;top:702px">padding-</span>
<span class="m" style="left:513px;top:746px">‒</span><span class="m" style="left:513px;top:768px">‒</span><span class="m" style="left:513px;top:790px">‒</span>
<span class="m" style="left:512px;top:812px">0</span>
<span class="m" style="left:425px;top:724px">0</span><span class="m" style="left:439px;top:724px">‒</span><span class="m" style="left:452px;top:724px">‒</span><span class="m" style="left:465px;top:724px">‒</span>
<span class="m" style="left:558px;top:724px">‒</span><span class="m" style="left:571px;top:724px">‒</span><span class="m" style="left:584px;top:724px">‒</span><span class="m" style="left:596px;top:724px">0</span>
<div class="x" style="left:613px;top:640px;width:3px;height:75px;background:#c8c8c8"></div>

<div class="x" style="left:415px;top:841px;width:201px;height:1px;background:#ddd"></div>
<span class="m" style="left:419px;top:849px;color:#777">Filter</span>
<i class="cb" style="left:543px;top:849px"></i><span class="m" style="left:562px;top:849px;color:#333">Show all</span>
<div class="x" style="left:415px;top:868px;width:201px;height:1px;background:#eee"></div>
<div class="x" style="left:415px;top:903px;width:201px;height:11px;background:#f5f5f5"></div>
<i class="tri" style="left:420px;top:875px"></i><div class="p" style="left:431px;top:872px"><em>background-a…</em></div><div class="p" style="left:552px;top:872px;color:#222">scroll</div>
<i class="tri" style="left:420px;top:891px"></i><div class="p" style="left:431px;top:888px"><em>background-c…</em></div><div class="p" style="left:552px;top:888px;color:#222">border…</div>
<i class="tri" style="left:420px;top:906px"></i><div class="p" style="left:431px;top:903px"><em>background-c…</em></div><div class="p" style="left:552px;top:903px;color:#222"><span style="display:inline-block;width:9px;height:9px;border:1px solid #aaa;background:#fff"></span>rgb(25!</div>
</div>
</body></html>
